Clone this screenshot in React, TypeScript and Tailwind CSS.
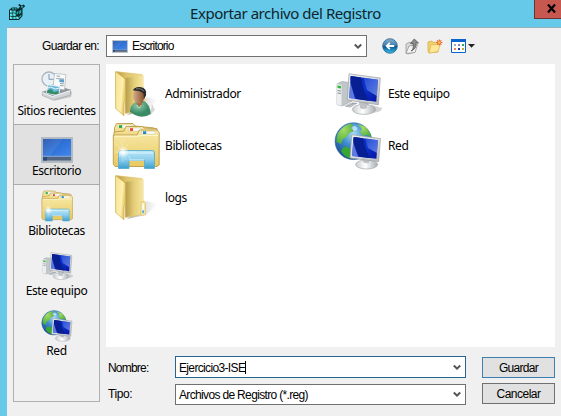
import React from "react";

type IconProps = { size?: number };

const FolderIcon = ({ user = false }: { user?: boolean }) => (
  <svg width="48" height="48" viewBox="0 0 48 48" className="shrink-0">
    <defs>
      <linearGradient id="fBack" x1="0" x2="1"><stop offset="0" stopColor="#b59a45" /><stop offset=".35" stopColor="#dcc26a" /><stop offset="1" stopColor="#f5e49b" /></linearGradient>
      <linearGradient id="fFront" x1="0" x2="1" y2=".4"><stop offset="0" stopColor="#f4e08f" /><stop offset=".7" stopColor="#fff0ad" /><stop offset="1" stopColor="#e4c868" /></linearGradient>
      <linearGradient id="fInner" x1="0" x2="1"><stop offset="0" stopColor="#b89c4a" /><stop offset=".5" stopColor="#e6cf7a" /><stop offset="1" stopColor="#f7e7a0" /></linearGradient>
      <linearGradient id="fShade" x1="0" x2="1"><stop offset="0" stopColor="#777" stopOpacity=".6" /><stop offset="1" stopColor="#999" stopOpacity="0" /></linearGradient>
      <linearGradient id="skin"><stop offset="0" stopColor="#d9ad8b" /><stop offset="1" stopColor="#80502c" /></linearGradient>
      <radialGradient id="shirt" cx=".4" cy=".3"><stop offset="0" stopColor="#91cfae" /><stop offset="1" stopColor="#3a8a66" /></radialGradient>
    </defs>
    <path d="M15 45L34 41L46 30L35 27L24 38Z" fill="url(#fShade)" />
    <path d="M4 1.6L29.5 4.5Q31 4.7 31 6.2V27L33 28.5V40L13.5 43.5L12 9Z" fill="url(#fBack)" stroke="#d9bd62" strokeWidth=".6" />
    <path d="M13.5 8L31 5.6V39.5L13.5 43Z" fill="url(#fInner)" />
    {!user && (
      <>
        <path d="M29 28L32.6 27.4L33.4 28.2V40.6L29.8 41.8L28.8 40.8Z" fill="#f7e7a2" stroke="#d8bd68" strokeWidth=".6" />
        <path d="M30.3 30L31.8 29.6V39L30.3 39.4Z" fill="#fff" />
        <path d="M30.3 36.5L31.8 36.1V39L30.3 39.4Z" fill="#419be0" />
      </>
    )}
    <path d="M3.5 1.7L12.3 8.2Q13.5 9 13.5 10.5V30.5L12 32.5V45.8L3.6 38.4Z" fill="url(#fFront)" stroke="#cdae50" strokeWidth=".7" />
    {user && (
      <>
        <path d="M38 45L43 40L40 34Z" fill="#999" opacity=".4" />
        <path d="M18 41Q18.5 34.5 24 32L32 31Q38.5 35 38.8 44Q31 49 23 45L18 42Z" fill="url(#shirt)" />
        <path d="M23.5 32L31 31L29.5 36L26.8 38Z" fill="#a66c43" />
        <path d="M25 35L27 38L29.4 35" stroke="#b9e3cc" fill="none" />
        <ellipse cx="26.8" cy="25.8" rx="5.8" ry="7.6" fill="url(#skin)" />
        <path d="M21 20.5Q22 16.8 28 17Q35.4 17.8 34 25.5L32 29L31.5 23.5Q29 20.5 21 20.5Z" fill="#292929" />
        <path d="M24 18.8Q29 17.8 32 21" stroke="#777" strokeWidth="1" fill="none" />
      </>
    )}
  </svg>
);

const LibraryIcon = ({ size = 48 }: IconProps) => (
  <svg width={size} height={size} viewBox="0 0 48 48" className="shrink-0">
    <defs>
      <linearGradient id="lib" x1="0" x2="0" y2="1"><stop offset="0" stopColor="#f8eaaa" /><stop offset="1" stopColor="#e8c95f" /></linearGradient>
      <linearGradient id="stand" x1="0" x2="0" y2="1"><stop offset="0" stopColor="#b9e8f8" /><stop offset=".5" stopColor="#8dcdec" /><stop offset="1" stopColor="#399fd0" /></linearGradient>
      <radialGradient id="spark"><stop offset="0" stopColor="#fff" /><stop offset="1" stopColor="#fff" stopOpacity="0" /></radialGradient>
    </defs>
    <g stroke="#ba9c4c" strokeWidth=".9">
      <path d="M2.5 10V6L4.5 1.5H21L23 4L42 6V20H2.5Z" fill="url(#lib)" />
      <path d="M6 3H19.5V6H6Z" fill="#fff" stroke="#ccc49b" strokeWidth=".5" />
      <path d="M2 13V10L12 9L14 4.5H30.5L32 6L45 6.5V20H2Z" fill="url(#lib)" />
      <path d="M16.5 6H29V9H16.5Z" fill="#fff" stroke="#ccc49b" strokeWidth=".5" />
      <path d="M1.3 13H25L27.5 8H45L47.2 10.5V43L45 44.5H3L1.3 42Z" fill="url(#lib)" />
      <path d="M29.5 9.3H43V12H29.5Z" fill="#fff" stroke="#ccc49b" strokeWidth=".5" />
    </g>
    <path d="M7 3.2h3.2v2.7H7z" fill="#21aa38" />
    <path d="M18 6.2h3v2.7h-3z" fill="#e7402c" />
    <path d="M31 9.3h3.2v2.7H31z" fill="#2286cd" />
    <path d="M2.5 14.2H26L28.5 13.5H46" stroke="#fff8ce" fill="none" />
    <path d="M6.5 31Q6.5 28.5 9 28.5H40Q42.5 28.5 42.5 31V46.5H32.5V38.5H17V46.5H6.5Z" fill="url(#stand)" stroke="#5fadcf" strokeWidth=".9" />
    <path d="M8 31H41M17 38H32" stroke="#dbf6ff" fill="none" />
    <g stroke="#fff" strokeWidth=".5" opacity=".6"><path d="M11 17V40M2 30H24M4 22L19 37M17 21L5 36M8 19L14 38" /></g>
    <circle cx="11" cy="30" r="6" fill="url(#spark)" />
  </svg>
);

const MonitorDefs = () => (
  <defs>
    <linearGradient id="frame" x1="0" x2="1" y2="1"><stop offset="0" stopColor="#eef0f1" /><stop offset=".5" stopColor="#dadde0" /><stop offset="1" stopColor="#b3b9be" /></linearGradient>
    <linearGradient id="scr" x1="0" x2="1" y2="1"><stop offset="0" stopColor="#0522a0" /><stop offset=".5" stopColor="#0c34cf" /><stop offset="1" stopColor="#0713a0" /></linearGradient>
    <linearGradient id="gloss" x1="0" x2="1" y1="0" y2="1"><stop offset="0" stopColor="#2f55d8" /><stop offset="1" stopColor="#88a5f2" /></linearGradient>
    <linearGradient id="base" x1="0" x2="1"><stop offset="0" stopColor="#c8cccf" /><stop offset=".45" stopColor="#fff" /><stop offset="1" stopColor="#a8adb1" /></linearGradient>
    <radialGradient id="globe" cx=".5" cy=".3" r=".7"><stop offset="0" stopColor="#a9dcf4" /><stop offset=".45" stopColor="#3f8dd0" /><stop offset="1" stopColor="#174890" /></radialGradient>
    <radialGradient id="land" cx=".4" cy=".3" r=".8"><stop offset="0" stopColor="#a5dc66" /><stop offset="1" stopColor="#41a535" /></radialGradient>
  </defs>
);

const ComputerIcon = ({ size = 48 }: IconProps) => (
  <svg width={size} height={size} viewBox="0 0 48 48" className="shrink-0">
    <MonitorDefs />
    <path d="M34 43Q48 43 48 38L38 35Z" fill="#aaa" opacity=".5" />
    <path d="M3 14L8 11.5L18 13V31L8 36L3 34.5Z" fill="#c1c6c9" stroke="#9ba1a5" strokeWidth=".6" />
    <path d="M3 14L7.5 14.7V35.8L3 34.5Z" fill="#eceeef" />
    <path d="M3.5 15.5L7 16V18.5L3.5 18Z" fill="#32bb35" />
    <path d="M3.5 20.5L7 21M3.5 23L7 23.5" stroke="#8a9094" />
    <path d="M10 36L18 32.5L24 33L16 37.5Z" fill="#9fa5a9" />
    <path d="M12 35.8L18 33.5M14 37L21 34" stroke="#e4e6e8" strokeWidth=".6" />
    <path d="M25 31H34L35 38L26 39Z" fill="#aab0b5" />
    <ellipse cx="30" cy="39.4" rx="11.7" ry="5" fill="url(#base)" stroke="#a5abae" strokeWidth=".7" />
    <path d="M26 32L33 34V38Q29 40 26 38Z" fill="#bdc2c6" />
    <path d="M15 3.8L46.3 8L44.4 34.8L13.2 30Z" fill="url(#frame)" stroke="#999fa4" strokeWidth=".7" />
    <path d="M16.7 6L44 9.7L42.3 31.8L15.1 27.9Z" fill="url(#scr)" />
    <path d="M16.7 6L27 7.4Q29 20 35 30.8L22 28.9Q18 20 16.5 9Z" fill="#071f93" />
    <path d="M29.5 7.8L44 9.7L42.8 26L33 20Z" fill="url(#gloss)" opacity=".7" />
    <path d="M16.2 12L21 28.7L15.1 27.9Z" fill="#8299e5" opacity=".7" />
  </svg>
);

const NetworkIcon = ({ size = 48 }: IconProps) => (
  <svg width={size} height={size} viewBox="0 0 48 48" className="shrink-0">
    <MonitorDefs />
    <circle cx="19.5" cy="19.2" r="18.4" fill="url(#globe)" stroke="#2d6295" strokeWidth=".6" />
    <path d="M4 11Q9 3 17 1.5L19 3L17 6L20 9L15 11L13 15L9 17L7 22L2.5 20Q2 15 4 11Z" fill="url(#land)" />
    <path d="M23 1.8L31 4.5Q36.5 9.5 37.5 16L33 13L29 14L26 10L28 7Z" fill="url(#land)" />
    <path d="M8.5 26L12 24.5L16.5 27L16.5 36.5Q10 35 7 29Z" fill="#39a535" />
    <path d="M19.5 4Q24 4 23 8L20 9L18 6Z" fill="#d7f0f9" opacity=".7" />
    <path d="M28 36H36V42H29Z" fill="#a9aeb3" />
    <ellipse cx="32.6" cy="42.5" rx="11" ry="4.5" fill="url(#base)" stroke="#a5abae" strokeWidth=".7" />
    <path d="M29 36L35 37V41Q32 42 29 40Z" fill="#bdc2c6" />
    <path d="M17.8 12.7L46.5 16.6L44.6 39.6L16 36Z" fill="url(#frame)" stroke="#999fa4" strokeWidth=".7" />
    <path d="M19.6 15L44 18.2L42.4 36.8L18 33.9Z" fill="url(#scr)" />
    <path d="M20 15L29 16.2Q31 27 36 36L25 34.7Q21 27 19.3 18Z" fill="#071f93" />
    <path d="M31.3 16.6L44 18.2L43 31L34 26Z" fill="url(#gloss)" opacity=".7" />
    <path d="M19 20L24 34.6L18 33.9Z" fill="#8299e5" opacity=".7" />
  </svg>
);

const DesktopIcon = ({ small = false }: { small?: boolean }) => (
  <svg width={small ? 16 : 32} height={small ? 13 : 26} viewBox="0 0 32 26" preserveAspectRatio="none" className="shrink-0">
    <defs>
      <linearGradient id="desk" x1="0" x2="1" y2="1"><stop offset="0" stopColor="#2352ad" /><stop offset=".5" stopColor="#2f73d9" /><stop offset="1" stopColor="#4387ec" /></linearGradient>
    </defs>
    <path d="M.7.7H31.3V25.3H.7Z" fill="#adb4bd" stroke="#b4bbc3" strokeWidth="1.4" />
    <path d="M2 2H30V20H2Z" fill="url(#desk)" />
    <path d="M2 2H22L8 20H2Z" fill="#fff" opacity=".08" />
    <path d="M2 19.5H30V23.5H2Z" fill="#526681" />
    <path d="M2 19.3H30" stroke="#a9c3e4" strokeWidth=".7" />
    <path d="M2 20H6V23.5H2Z" fill="#294b79" />
  </svg>
);

const RecentIcon = () => (
  <svg width="32" height="32" viewBox="0 0 32 32">
    <path d="M12 31L30 27L31 22L27 20Z" fill="#999" opacity=".5" />
    <path d="M1.5 22L19 17L29.5 20L12 28Z" fill="#8f9498" stroke="#777c80" strokeWidth=".5" />
    <circle cx="8" cy="9" r="7" fill="#e9f1f6" stroke="#a9b7c0" strokeWidth="1.3" />
    <path d="M8 4V9.3H12.5" stroke="#6f8fa5" strokeWidth=".9" fill="none" />
    <path d="M13.5 3.5L24.8 4.5L23.5 20L12 18Z" fill="#f9fafa" stroke="#a1a9ae" strokeWidth=".6" />
    <path d="M15.5 6L19 6.3M15.3 8.5L23 9.1M19 13.5L22.8 13.8M19 15.5L22.7 15.8" stroke="#8799a7" strokeWidth=".9" />
    <path d="M18.5 9.2L23 9.5V12.5L18.3 12.1Z" fill="#579fc8" />
    <path d="M7 14.8L19 16.5L17.8 25.5L5.5 23.2Z" fill="#69b8da" stroke="#f9f9f9" strokeWidth=".8" />
    <path d="M6.3 20.5L10 19L13 22L17.8 21L17.2 25L6 23Z" fill="#348d69" />
    <path d="M7 18Q10 16 12 18T18 18" stroke="#e4f5fa" fill="none" />
    <path d="M1.3 22L11.5 26L29.5 20V25L12 30L1.3 25.5Z" fill="#d2d5d7" stroke="#999fa3" strokeWidth=".6" />
    <path d="M1.5 22.5L11.5 26.5L29 20.7" stroke="#fff" strokeWidth=".8" fill="none" />
  </svg>
);

const RegistryIcon = () => (
  <svg width="17" height="17" viewBox="0 0 17 17">
    <path d="M0 6L3 3.5H8L9 5L11 2.5L9 1L10.5 0L12.5 1.5L15 .5L16 2.5L13.5 4.5V12L10 16H0Z" fill="#0a2a2e" />
    <path d="M1 6.5h2.5v2.3H1zM4.3 6.5h2.4v2.3H4.3zM1 9.6h2.5v2.3H1zM4.3 9.6h2.4v2.3H4.3zM1 12.7h2.5V15H1zM4.3 12.7h2.4V15H4.3zM7.4 12.7h2.3V15H7.4z" fill="#4be0dd" />
    <path d="M3 4.2h2.2v1.3H3zM6 4.2h1.6v1.3H6zM11.8 2.8l1.4-1 1.2 1-1.7 1.4zM7.6 8.5l1.8-2v2.6l-1.8 1.8zM10.2 7.2l2-1.6v3l-2 1.8zM10.4 12.3l1.9-1.7v1.6L10.4 14z" fill="#27b5b4" />
    <path d="M1 6.5h1v1H1zM4.3 9.6h1v1h-1zM1 12.7h1v1H1zM7.4 12.7h1v1h-1z" fill="#e7ffff" />
  </svg>
);

const BackIcon = () => (
  <svg width="16" height="16" viewBox="0 0 16 16">
    <defs><linearGradient id="back" x2="0" y2="1"><stop stopColor="#89b4d2" /><stop offset=".48" stopColor="#3b7aae" /><stop offset=".52" stopColor="#07538f" /><stop offset="1" stopColor="#35c2ee" /></linearGradient></defs>
    <circle cx="8" cy="8" r="7.3" fill="url(#back)" stroke="#315f86" strokeWidth=".8" />
    <path d="M12.2 8H5M7.8 4.9L4.7 8L7.8 11.1" stroke="#fff" strokeWidth="1.8" fill="none" />
  </svg>
);

const UpIcon = () => (
  <svg width="15" height="17" viewBox="0 0 15 17">
    <path d="M1 6L5 4L6 5L10 4V14L3 16L1 15Z" fill="#dadada" stroke="#999" strokeWidth=".8" />
    <path d="M1 15.5L4 8L12.5 6.5L10 14.5Z" fill="#f3f3f3" stroke="#949494" strokeWidth=".8" />
    <path d="M6 13Q9.2 11 8 5.5H5.5L9.3 1L13.5 5H11Q11.6 11 6 13Z" fill="#8c8c8c" stroke="#555" strokeWidth=".8" />
  </svg>
);

const NewFolderIcon = () => (
  <svg width="16" height="15" viewBox="0 0 16 15">
    <path d="M1 3L5 2L6 3.5L11 3V13L2 14L1 12Z" fill="#efcf70" stroke="#d4ae4c" strokeWidth=".8" />
    <path d="M2 14L4 6L13.5 5L11 12.5Z" fill="#ffe798" stroke="#dfbb58" strokeWidth=".8" />
    <path d="M12.3 .5V6.5M9.3 3.5H15.3M10.2 1.4L14.4 5.6M14.4 1.4L10.2 5.6" stroke="#e9622a" strokeWidth="1.1" />
    <circle cx="12.3" cy="3.5" r="1.3" fill="#ffc95a" />
  </svg>
);

const ViewIcon = () => (
  <svg width="24" height="14" viewBox="0 0 24 14">
    <path d="M.5.5H14.5V13.5H.5Z" fill="#fff" stroke="#0865cf" />
    <path d="M0 0H15V3H0Z" fill="#0865cf" />
    <path d="M3 5h2v2H3z" fill="#9ba8b9" />
    <path d="M7 5h2v2H7z" fill="#8585c9" />
    <path d="M11 5h2v2h-2z" fill="#2da94a" />
    <path d="M3 9h2v2H3z" fill="#ea8264" />
    <path d="M7 9h2v2H7z" fill="#153e9d" />
    <path d="M11 9h2v2h-2z" fill="#caa42d" />
    <path d="M17 5H24L20.5 8.8Z" fill="#222" />
  </svg>
);

const Chevron = () => (
  <svg width="8" height="7" viewBox="0 0 8 7" className="ml-auto shrink-0">
    <path d="M.8 1.5L4 4.7L7.2 1.5" stroke="#555" strokeWidth="2" fill="none" />
  </svg>
);

const places = [
  { label: "Sitios recientes", icon: <RecentIcon /> },
  { label: "Escritorio", icon: <div className="pt-[7px]"><DesktopIcon /></div> },
  { label: "Bibliotecas", icon: <LibraryIcon size={32} /> },
  { label: "Este equipo", icon: <ComputerIcon size={32} /> },
  { label: "Red", icon: <NetworkIcon size={32} /> },
];

const files = [
  { label: "Administrador", icon: <FolderIcon user /> },
  { label: "Este equipo", icon: <ComputerIcon /> },
  { label: "Bibliotecas", icon: <LibraryIcon /> },
  { label: "Red", icon: <NetworkIcon /> },
  { label: "logs", icon: <FolderIcon /> },
];

export default function App() {
  return (
    <div className="flex h-[416px] w-[561px] flex-col overflow-hidden whitespace-nowrap bg-[#66c9e9] font-['Liberation_Sans',sans-serif] text-[12px] text-black">
      <header className="flex h-[27px] shrink-0">
        <div className="w-[181px] pt-1 pl-[9px]"><RegistryIcon /></div>
        <h1 className="flex-1 pl-[9px] font-['Noto_Sans',sans-serif] text-[15px] leading-[26px] tracking-[-0.45px] text-[#10242c]">Exportar archivo del Registro</h1>
        <button className="flex h-[19px] w-[27px] justify-center border-b border-l border-[#6b3431] bg-[#c75850] pt-1 pl-[6px]">
          <svg width="9" height="9" viewBox="0 0 9 9"><path d="M1 .5L8 8.5M8 .5L1 8.5" stroke="#000" strokeWidth="2.2" /></svg>
        </button>
      </header>
      <main className="ml-[7px] flex min-h-0 flex-1 flex-col border-t border-[#8fb5c3] bg-[#f0f0f0]">
        <div className="flex h-9 shrink-0 items-start pt-[7px]">
          <label className="w-[99px] pl-[35px] leading-[22px] tracking-[-0.65px]">Guardar en:</label>
          <div className="flex h-[22px] w-[261px] items-center border border-[#707070] bg-white pr-1 pl-[5px]">
            <DesktopIcon small />
            <span className="pl-1 tracking-[-0.85px]">Escritorio</span>
            <Chevron />
          </div>
          <div className="flex h-[22px] items-center gap-[7px] pl-[15px]">
            <BackIcon />
            <UpIcon />
            <NewFolderIcon />
            <div className="pl-px"><ViewIcon /></div>
          </div>
        </div>
        <div className="flex pl-[6px]">
          <nav className="h-[338px] w-[87px] shrink-0 border border-[#b0b0b0]">
            {places.map((p, i) => (
              <div key={p.label} className={i === 1 ? "-mx-px -mt-px flex h-[61px] flex-col items-center border border-[#aaa] bg-[#e1e1e1] pt-[5px]" : "flex h-[60px] flex-col items-center pt-[5px]"}>
                <div className="h-8">{p.icon}</div>
                <span className="font-['Noto_Sans',sans-serif] text-[12px] leading-[17px] tracking-[-0.4px]">{p.label}</span>
              </div>
            ))}
          </nav>
          <div className="ml-[6px] w-[449px]">
            <section className="grid h-[283px] grid-cols-[222px_1fr] content-start gap-y-1 bg-white pt-[6px] pl-[6px]">
              {files.map((f, i) => (
                <div key={f.label} className="flex h-12 items-center">
                  {f.icon}
                  <span className={i % 2 ? "pl-[6px] font-['Noto_Sans',sans-serif] text-[12px] tracking-[-0.4px]" : "pl-[5px] font-['Noto_Sans',sans-serif] text-[12px] tracking-[-0.4px]"}>{f.label}</span>
                </div>
              ))}
            </section>
            <form className="grid grid-cols-[69px_291px_73px] grid-rows-[22px_22px] items-start gap-y-[5px] pt-[9px]">
              <label className="pl-[2px] leading-[24px] tracking-[-0.8px]">Nombre:</label>
              <div className="flex h-[22px] items-center border border-[#28628f] bg-white pr-1 pl-[3px]">
                <span className="pt-px tracking-[-0.65px]">Ejercicio3-ISE</span>
                <i className="h-[13px] w-px bg-black" />
                <Chevron />
              </div>
              <button type="button" className="mt-px ml-4 h-[21px] w-[73px] border border-[#3c7fb1] bg-[#e1e1e1] tracking-[-0.7px]">Guardar</button>
              <label className="pl-[2px] leading-[22px] tracking-[-0.4px]">Tipo:</label>
              <div className="mt-px flex h-[21px] items-center border border-[#707070] bg-white pr-1 pl-[3px]">
                <span className="pt-px tracking-[-0.66px]">Archivos de Registro (*.reg)</span>
                <Chevron />
              </div>
              <button type="button" className="ml-4 h-[21px] w-[73px] border border-[#707070] bg-[#e1e1e1] tracking-[-0.5px]">Cancelar</button>
            </form>
          </div>
        </div>
      </main>
    </div>
  );
}
